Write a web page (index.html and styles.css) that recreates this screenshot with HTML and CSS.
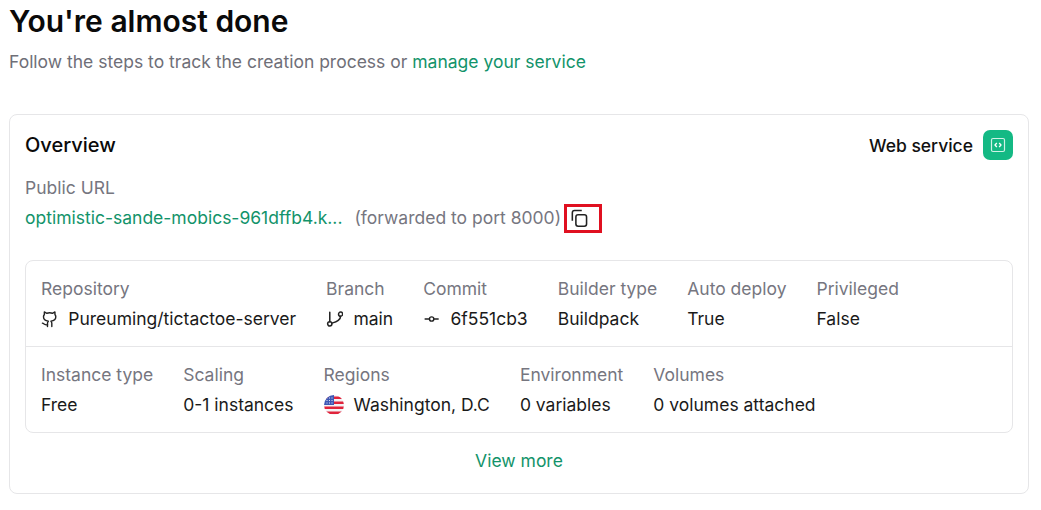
FILE: index.html
```html
<!DOCTYPE html>
<html lang="en">
<head>
    <meta charset="UTF-8">
    <title>You're almost done</title>
    <link rel="stylesheet" href="styles.css">
</head>
<body>
    <h1 class="title">You're almost done</h1>
    <p class="subtitle">Follow the steps to track the creation process or <a class="link" href="#">manage your service</a></p>

    <div class="card">
        <div class="card-head">
            <h2 class="card-title">Overview</h2>
            <div class="service">
                <span class="service-name">Web service</span>
                <span class="service-icon">
                    <svg width="16" height="16" viewBox="0 0 16 16" fill="none" stroke="#fff">
                        <rect x="1.5" y="1.5" width="13" height="13" rx="1.5" stroke-width="1.2" opacity="0.8"/>
                        <path d="M6.8 6 5 8l1.8 2M9.2 6 11 8l-1.8 2" stroke-width="1.3"/>
                    </svg>
                </span>
            </div>
        </div>

        <div class="label">Public URL</div>
        <div class="url-row">
            <a class="link url" href="#">optimistic-sande-mobics-961dffb4.k...</a>
            <span class="label forwarded">(forwarded to port 8000)</span>
            <span class="copy">
                <svg width="20" height="20" viewBox="0 0 18 18" fill="none" stroke="#222" stroke-width="1.4">
                    <rect x="6.2" y="6" width="9.6" height="10.4" rx="2"/>
                    <path d="M3 11.5V4.2C3 3 3.8 2.2 5 2.2h6.5"/>
                </svg>
            </span>
        </div>

        <div class="details">
            <div class="details-row">
                <div class="item">
                    <div class="label">Repository</div>
                    <div class="value">
                        <svg class="icon" viewBox="0 0 16 16" fill="none" stroke="#222" stroke-width="1.3" stroke-linecap="round" stroke-linejoin="round">
                            <path d="M6 15v-3c0-1 .3-1.500.8-2C3.800 9.700 2.300 8.500 2.300 6c0-.9.3-1.600.8-2.200V1.500l2.300 1.200a8 8 0 0 1 5.200 0l2.300-1.200v2.300c.5.6.8 1.300.8 2.200 0 2.500-1.500 3.700-4.500 4 .5.5.8 1 .8 2v3"/>
                            <path d="M6 13.300C3.500 14 3 12.200 1.300 11.800"/>
                        </svg>
                        Pureuming/tictactoe-server
                    </div>
                </div>
                <div class="item">
                    <div class="label">Branch</div>
                    <div class="value">
                        <svg class="icon" viewBox="0 0 16 16" fill="none" stroke="#222" stroke-width="1.4" stroke-linecap="round">
                            <circle cx="3.500" cy="12.500" r="2"/>
                            <circle cx="13.500" cy="3.500" r="1.900"/>
                            <path d="M3.500 10.500V1.800M13.500 5.500C13.500 9 10 10.600 5.500 11.800"/>
                        </svg>
                        main
                    </div>
                </div>
                <div class="item">
                    <div class="label">Commit</div>
                    <div class="value">
                        <svg class="icon" viewBox="0 0 16 16" fill="none" stroke="#222" stroke-width="1.3">
                            <circle cx="8" cy="8" r="2"/>
                            <path d="M1.500 8H6M10 8h4.500"/>
                        </svg>
                        6f551cb3
                    </div>
                </div>
                <div class="item">
                    <div class="label">Builder type</div>
                    <div class="value">Buildpack</div>
                </div>
                <div class="item">
                    <div class="label">Auto deploy</div>
                    <div class="value">True</div>
                </div>
                <div class="item">
                    <div class="label">Privileged</div>
                    <div class="value">False</div>
                </div>
            </div>
            <div class="details-row bottom">
                <div class="item">
                    <div class="label">Instance type</div>
                    <div class="value">Free</div>
                </div>
                <div class="item">
                    <div class="label">Scaling</div>
                    <div class="value">0-1 instances</div>
                </div>
                <div class="item">
                    <div class="label">Regions</div>
                    <div class="value">
                        <svg class="flag" width="20" height="20" viewBox="0 0 20 20">
                            <defs><clipPath id="round"><circle cx="10" cy="10" r="10"/></clipPath></defs>
                            <g clip-path="url(#round)">
                                <rect width="20" height="20" fill="#f3f3f5"/>
                                <path d="M0 1.500h20v2.500H0zM9 6.500h11v2.500H9zM0 11.500h20V14H0zM0 16.500h20V19H0z" fill="#e0243c"/>
                                <rect width="10" height="10" fill="#3d57b5"/>
                                <path d="M2.500 3h1M5 3h1M7.500 3h1M2.500 5.500h1M5 5.500h1M7.500 5.500h1M2.500 8h1M5 8h1M7.500 8h1" stroke="#dfe4f5"/>
                            </g>
                        </svg>
                        Washington, D.C
                    </div>
                </div>
                <div class="item">
                    <div class="label">Environment</div>
                    <div class="value">0 variables</div>
                </div>
                <div class="item">
                    <div class="label">Volumes</div>
                    <div class="value">0 volumes attached</div>
                </div>
            </div>
        </div>

        <div class="more"><a class="link" href="#">View more</a></div>
    </div>
</body>
</html>
```

FILE: styles.css
```css
body {
    margin: 0;
    padding: 0 12px 0 9px;
    font-family: Inter, "Liberation Sans", sans-serif;
    font-size: 17.5px;
    line-height: 24px;
    color: #111;
    background: #fff;
}

.title {
    margin: 0;
    padding-top: 3px;
    font-size: 30px;
    line-height: 36px;
    font-weight: 600;
    color: #0a0a0a;
}

.subtitle {
    margin: 11px 0 0;
    color: #6f6f78;
}

.link {
    color: #12936a;
    text-decoration: none;
}

.card {
    margin-top: 40px;
    padding: 15px 15px 20px;
    border: 1px solid #e6e6e8;
    border-radius: 8px;
}

.card-head {
    display: flex;
    justify-content: space-between;
    align-items: center;
    height: 30px;
}

.card-title {
    margin: 0;
    font-size: 20px;
    line-height: 28px;
    font-weight: 500;
    color: #0a0a0a;
}

.service {
    display: flex;
    align-items: center;
    gap: 10px;
    font-weight: 500;
}

.service-name {
    padding-top: 2px;
}

.service-icon {
    display: flex;
    align-items: center;
    justify-content: center;
    width: 30px;
    height: 30px;
    border-radius: 7px;
    background: #14b984;
}

.label {
    color: #76767f;
}

.card-head + .label {
    margin-top: 16px;
}

.url-row {
    display: flex;
    align-items: center;
    margin-top: 6px;
    height: 24px;
}

.forwarded {
    margin-left: 12px;
}

.copy {
    display: flex;
    align-items: center;
    box-sizing: border-box;
    width: 38px;
    height: 29px;
    margin-left: 3px;
    padding-left: 2px;
    border: 3px solid #e01020;
}

.details {
    margin-top: 30px;
    border: 1px solid #e6e6e8;
    border-radius: 8px;
}

.details-row {
    display: flex;
    gap: 30px;
    padding: 16px 15px 15px;
}

.details-row.bottom {
    border-top: 1px solid #e6e6e8;
}

.value {
    display: flex;
    align-items: center;
    gap: 10px;
    margin-top: 6px;
    color: #1a1a1a;
}

.icon {
    width: 17.3px;
    height: 18px;
}

.more {
    margin-top: 16px;
    text-align: center;
}
```
